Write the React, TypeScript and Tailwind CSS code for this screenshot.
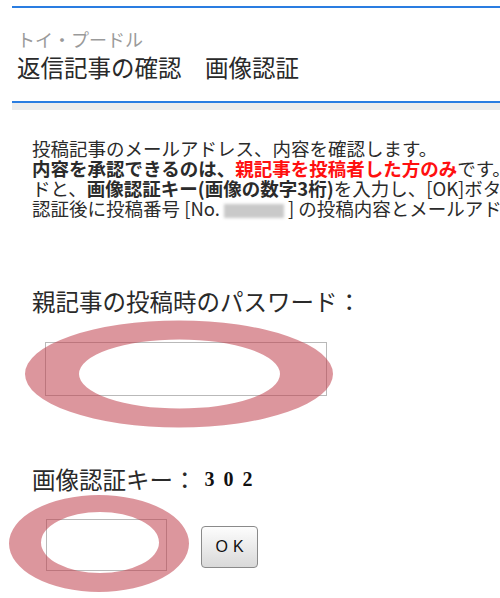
export default function App() {
  const jp = { fontFamily: '"Noto Sans CJK JP", "Noto Sans", sans-serif' };

  return (
    <div className="relative w-[500px] h-[598px] overflow-hidden bg-white text-[#333]" style={jp}>
      {/* header */}
      <div className="ml-[12px] mt-[6px] border-t-2 border-[#2a7de1]">
        <div className="pl-[5px] pt-[19px] pb-[18px]">
          <div className="text-[18px] leading-[24px] text-[#9a9a9a] whitespace-nowrap">トイ・プードル</div>
          <div className="text-[23.5px] leading-[32px] text-[#2a2a2a] whitespace-nowrap">返信記事の確認　画像認証</div>
        </div>
        <div className="border-t-2 border-[#2a7de1]" />
        <div className="h-[7px] bg-[#ececec]" />
      </div>

      {/* body */}
      <div className="pl-[32px] pt-[28px]">
        <div className="text-[18.5px] leading-[20px] whitespace-nowrap text-[#2b2b2b]">
          <p>投稿記事のメールアドレス、内容を確認します。</p>
          <p>
            <b>内容を承認できるのは、</b>
            <b className="text-[#ff1010]">親記事を投稿者した方のみ</b>
            です。親記事の投稿時のパスワー
          </p>
          <p>
            ドと、<b>画像認証キー(画像の数字3桁)</b>を入力し、[OK]ボタンを押してください。
          </p>
          <p>
            認証後に投稿番号 [No.
            <span className="inline-block align-middle w-[60px] h-[14px] mx-[4px] bg-[#c9c9c9] blur-[1.5px]" />
            ] の投稿内容とメールアドレスが表示されます。
          </p>
        </div>

        <div className="mt-[68px] text-[23.5px] leading-[30px] text-[#2a2a2a] whitespace-nowrap">親記事の投稿時のパスワード：</div>

        <div className="relative mt-[26px] ml-[13px] w-[282px] h-[54px] border border-[#b9b9b9]">
          <svg className="absolute left-[-23px] top-[-23px]" width="310" height="110" viewBox="0 0 310 110">
            <path
              fillRule="evenodd"
              fill="#c0404c"
              opacity="0.55"
              d="M2 54a154 53.5 0 1 0 308 0a154 53.5 0 1 0 -308 0Z M56 54a100.5 34.5 0 1 0 201 0a100.5 34.5 0 1 0 -201 0Z"
            />
          </svg>
        </div>

        <div className="mt-[68px] flex items-center whitespace-nowrap">
          <span className="text-[23.5px] leading-[30px] text-[#2a2a2a]">画像認証キー：</span>
          <span
            className="ml-[8px] text-[20px] font-bold tracking-[9px] text-[#111]"
            style={{ fontFamily: '"Liberation Serif", serif' }}
          >
            302
          </span>
        </div>

        <div className="mt-[25px] ml-[14px] flex items-center">
          <div className="relative w-[121px] h-[52px] border border-[#b9b9b9]">
            <svg className="absolute left-[-39px] top-[-26px]" width="182" height="100" viewBox="0 0 182 100">
              <path
                fillRule="evenodd"
                fill="#c0404c"
                opacity="0.55"
                d="M1 49.5a90 48.5 0 1 0 180 0a90 48.5 0 1 0 -180 0Z M33 48.5a59 30.5 0 1 0 118 0a59 30.5 0 1 0 -118 0Z"
              />
            </svg>
          </div>
          <button
            className="ml-[34px] mt-[3px] w-[57px] h-[42px] rounded-[4px] border border-[#8a8a8a] bg-gradient-to-b from-[#fdfdfd] to-[#d9d9d9] text-[16px] tracking-[5px] pl-[5px] text-[#111]"
            style={{ fontFamily: '"Liberation Sans", Arial, sans-serif' }}
          >
            OK
          </button>
        </div>
      </div>
    </div>
  );
}
